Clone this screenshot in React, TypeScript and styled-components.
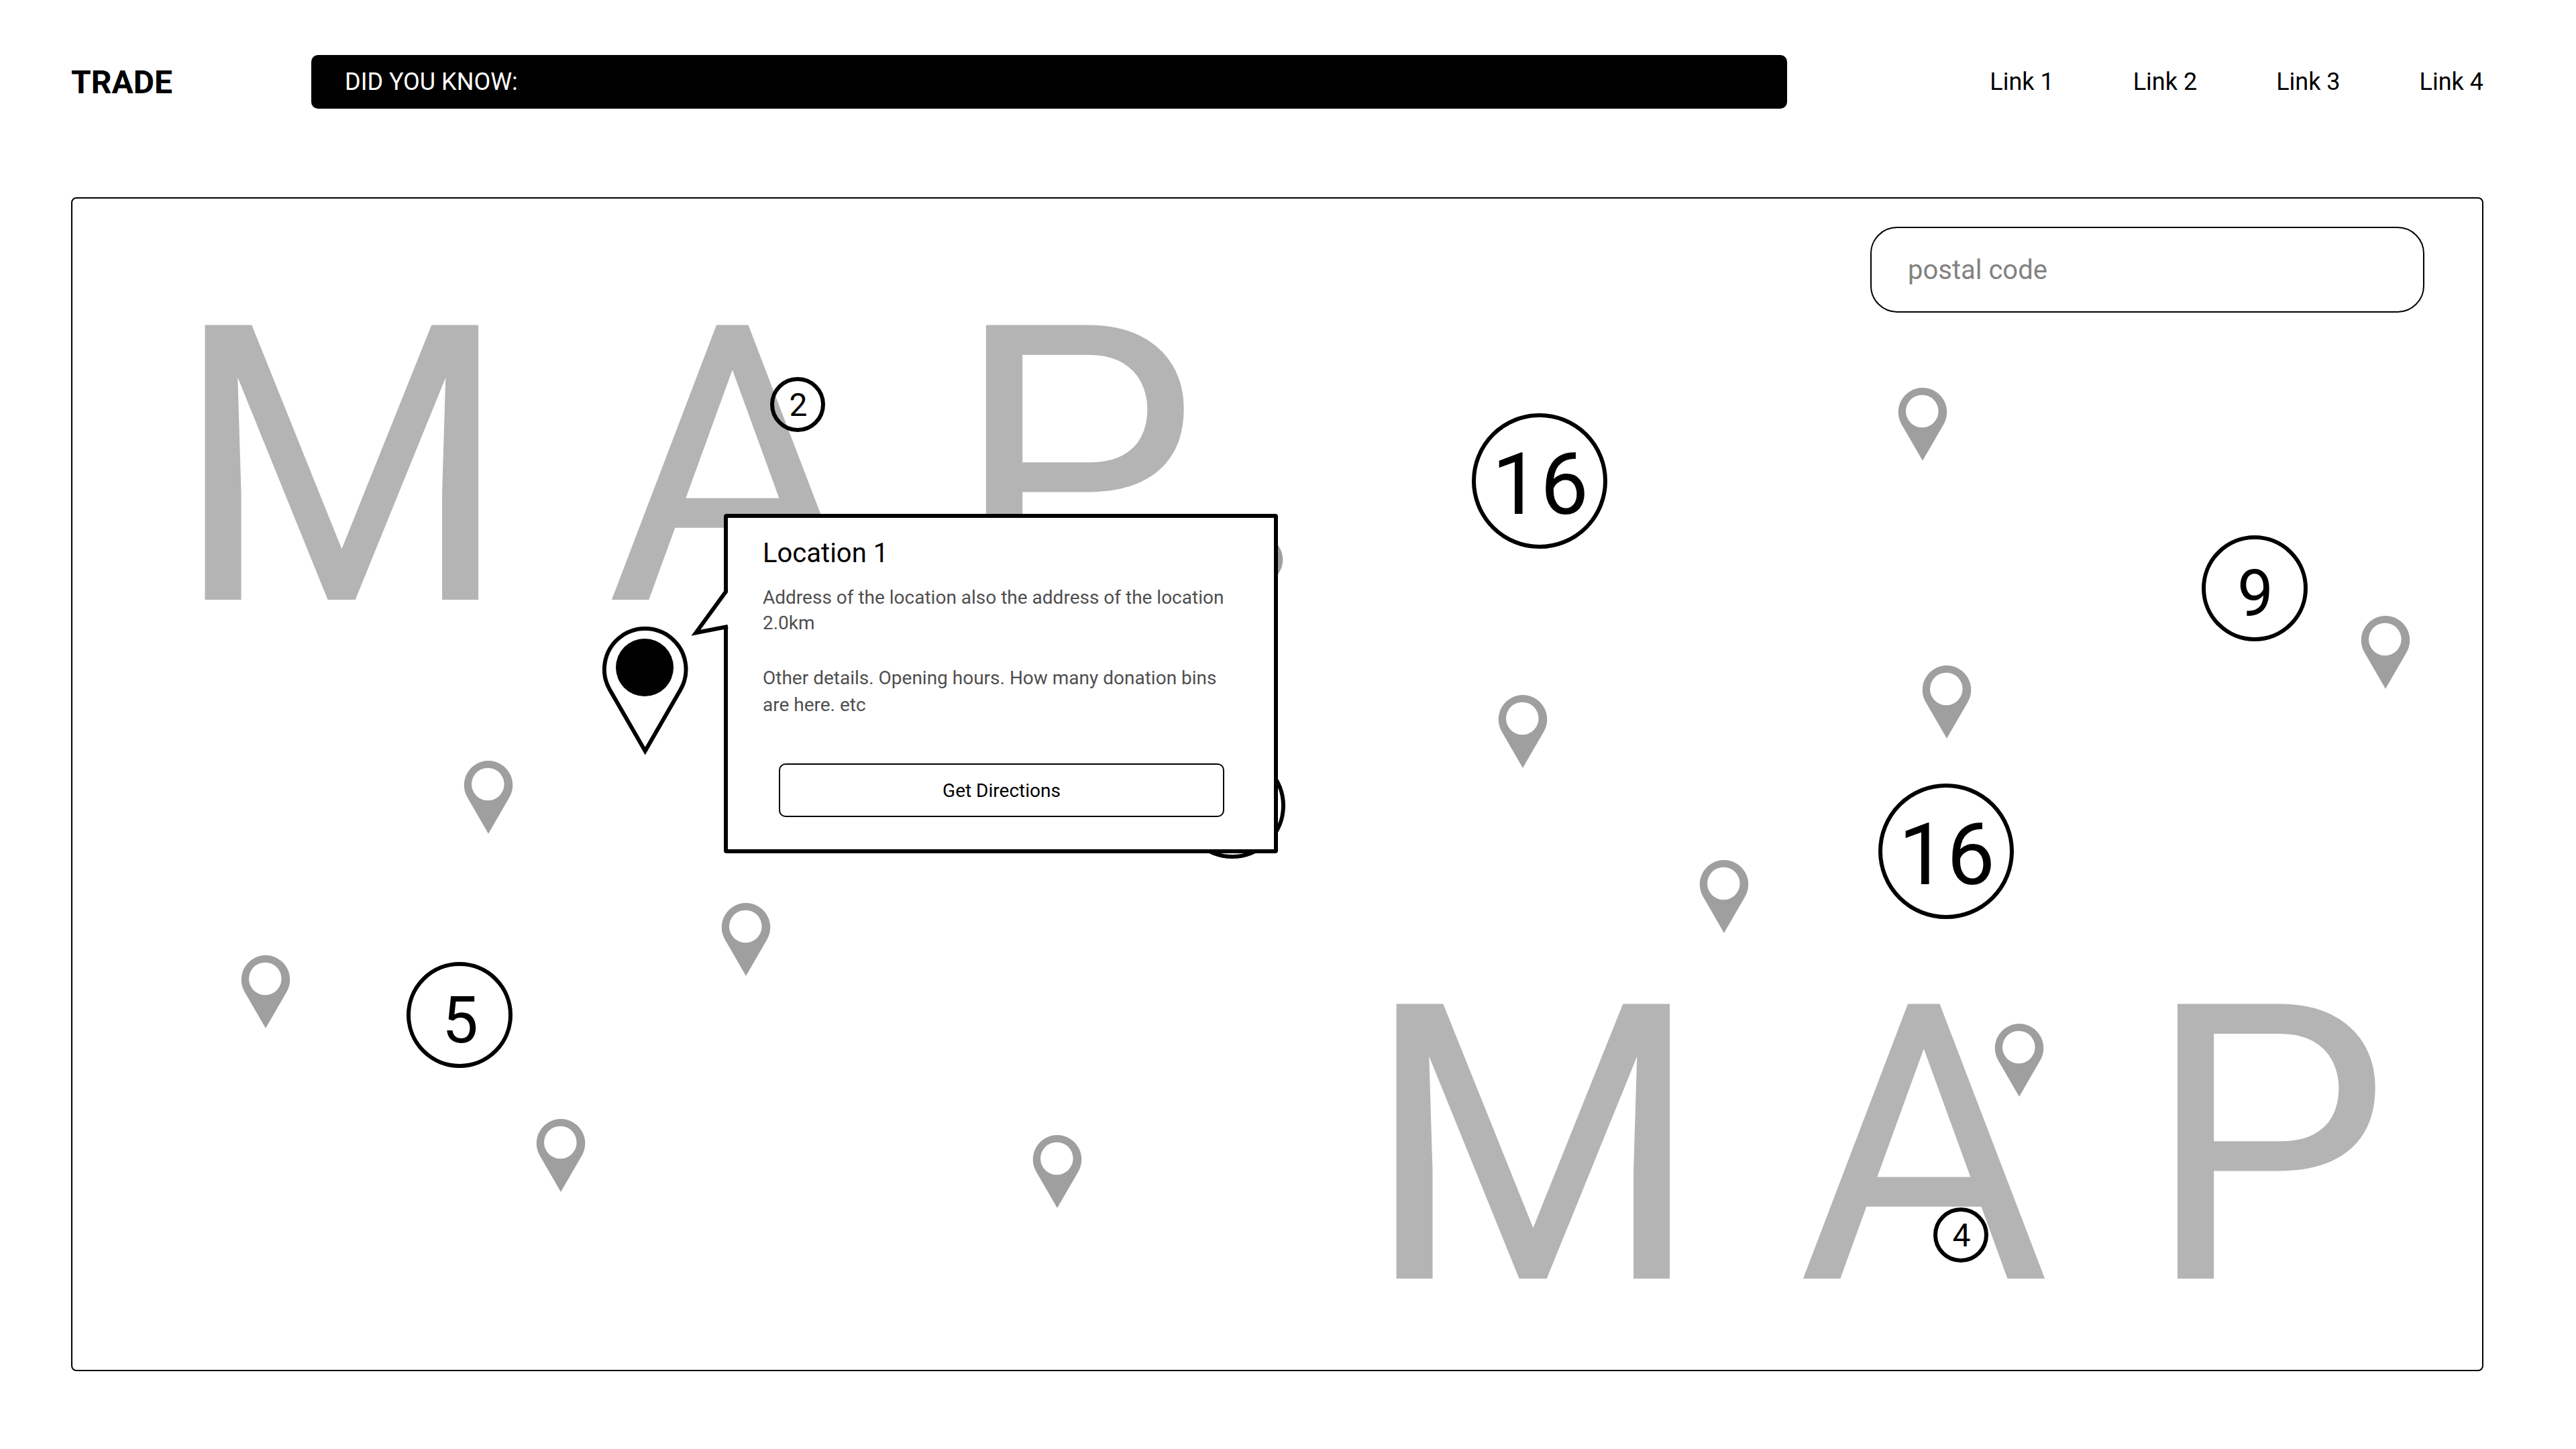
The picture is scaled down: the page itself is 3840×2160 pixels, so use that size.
import React from "react";
import styled, { createGlobalStyle, css } from "styled-components";

const GlobalStyle = createGlobalStyle`
  *, *::before, *::after { box-sizing: border-box; }
  html, body { margin: 0; padding: 0; }
  body {
    background: #fff;
    color: #000;
    font-family: Roboto, "Liberation Sans", sans-serif;
  }
  button, input { font-family: inherit; color: inherit; }
`;

const Page = styled.div`
  display: flex;
  flex-direction: column;
  gap: 132px;
  min-height: 100vh;
  padding: 82px 138px 116px 106px;
`;

const Header = styled.header`
  display: flex;
  align-items: center;
`;

const Brand = styled.h1`
  flex: 0 0 358px;
  margin: 0;
  font-size: 48px;
  font-weight: 700;
`;

const Banner = styled.div`
  flex: 1;
  display: flex;
  align-items: center;
  height: 80px;
  padding: 0 50px;
  border-radius: 10px;
  background: #000;
  color: #fff;
  font-size: 36px;
`;

const Nav = styled.nav`
  display: flex;
  gap: 118px;
  padding-left: 302px;
`;

const NavLink = styled.a`
  color: #000;
  font-size: 36px;
  text-decoration: none;
  white-space: nowrap;
`;

const MapPanel = styled.main`
  position: relative;
  flex: 1;
  display: flex;
  justify-content: flex-end;
  align-items: flex-start;
  padding: 42px 86px;
  border: 2px solid #000;
  border-radius: 8px;
`;

const SearchForm = styled.form`
  display: flex;
  width: 826px;
`;

const SearchInput = styled.input`
  width: 100%;
  height: 128px;
  padding: 0 54px;
  border: 2px solid #000;
  border-radius: 40px;
  background: #fff;
  font-size: 40px;
  &::placeholder { color: #828282; opacity: 1; }
`;

/* The map canvas is drawn on a 3592 x 1746 grid; items are placed as a share of it. */
const GRID_W = 3592;
const GRID_H = 1746;

interface Spot {
  $x: number;
  $y: number;
}

const onMap = css<Spot>`
  position: absolute;
  left: ${({ $x }) => ($x / GRID_W) * 100}%;
  top: ${({ $y }) => ($y / GRID_H) * 100}%;
`;

const MapWord = styled.span<Spot>`
  ${onMap}
  color: #b4b4b4;
  font-size: 576px;
  line-height: 576px;
  white-space: nowrap;
`;

const PinButton = styled.button<Spot>`
  ${onMap}
  padding: 0;
  border: 0;
  background: none;
  cursor: pointer;
  svg { display: block; }
`;

type Size = "small" | "medium" | "large";

const clusterSizes = {
  small: { box: 82, font: 48, drop: 0 },
  medium: { box: 158, font: 96, drop: 16 },
  large: { box: 202, font: 128, drop: 10 },
};

const ClusterButton = styled.button<Spot & { $size: Size }>`
  ${onMap}
  display: flex;
  align-items: center;
  justify-content: center;
  width: ${({ $size }) => clusterSizes[$size].box}px;
  height: ${({ $size }) => clusterSizes[$size].box}px;
  padding: ${({ $size }) => clusterSizes[$size].drop}px 0 0 2px;
  border: 6px solid #000;
  border-radius: 50%;
  background: none;
  font-size: ${({ $size }) => clusterSizes[$size].font}px;
  cursor: pointer;
`;

const Popup = styled.section<Spot>`
  ${onMap}
  display: flex;
  flex-direction: column;
  width: 826px;
  padding: 29px 74px 48px 52px;
  border: 6px solid #000;
  border-radius: 4px;
  background: #fff;
`;

const PopupTail = styled.svg`
  position: absolute;
  left: -58px;
  top: 100px;
  width: 60px;
  height: 80px;
`;

const PopupTitle = styled.h2`
  margin: 0 0 23px;
  font-size: 40px;
  font-weight: 400;
  line-height: 48px;
`;

const PopupText = styled.p`
  margin: 0;
  color: #4f4f4f;
  font-size: 28px;
  line-height: 38px;
`;

const PopupDetails = styled(PopupText)`
  margin: 43px 0 67px;
  line-height: 40px;
`;

const DirectionsButton = styled.button`
  height: 80px;
  margin-left: 24px;
  padding: 0;
  border: 2px solid #000;
  border-radius: 10px;
  background: #fff;
  font-size: 28px;
  cursor: pointer;
`;

const links = ["Link 1", "Link 2", "Link 3", "Link 4"];

const words = [
  { x: 150, y: 114 },
  { x: 1926, y: 1126 },
];

const pins = [
  { x: 2721, y: 282 },
  { x: 2125, y: 740 },
  { x: 2757, y: 696 },
  { x: 2425, y: 986 },
  { x: 3411, y: 622 },
  { x: 583, y: 838 },
  { x: 251, y: 1128 },
  { x: 967, y: 1050 },
  { x: 691, y: 1372 },
  { x: 2865, y: 1230 },
  { x: 1431, y: 1396 },
  { x: 1731, y: 502 },
];

const clusters: { x: number; y: number; size: Size; count?: number }[] = [
  { x: 1040, y: 266, size: "small", count: 2 },
  { x: 2086, y: 320, size: "large", count: 16 },
  { x: 3174, y: 502, size: "medium", count: 9 },
  { x: 2692, y: 872, size: "large", count: 16 },
  { x: 498, y: 1138, size: "medium", count: 5 },
  { x: 2774, y: 1504, size: "small", count: 4 },
  { x: 1650, y: 826, size: "medium" },
];

const PinIcon = () => (
  <svg width="74" height="110" viewBox="0 0 74 110" aria-hidden="true">
    <path
      fill="#9f9f9f"
      fillRule="evenodd"
      d="M5.6 54.4A36.25 36.25 0 1 1 68.4 54.4L37 108.8ZM12 35a24.3 24.3 0 1 0 48.6 0a24.3 24.3 0 1 0-48.6 0Z"
    />
  </svg>
);

const SelectedPinIcon = () => (
  <svg width="128" height="193" viewBox="0 0 128 193" aria-hidden="true">
    <path
      fill="#fff"
      stroke="#000"
      strokeWidth="6"
      d="M11.05 94.2A60.8 60.8 0 1 1 116.35 94.2L63.7 185.4Z"
    />
    <circle cx="63" cy="61" r="43" />
  </svg>
);

export default function App() {
  return (
    <>
      <GlobalStyle />
      <Page>
        <Header>
          <Brand>TRADE</Brand>
          <Banner>DID YOU KNOW:</Banner>
          <Nav>
            {links.map((label) => (
              <NavLink key={label} href="#">
                {label}
              </NavLink>
            ))}
          </Nav>
        </Header>
        <MapPanel>
          {words.map((w) => (
            <MapWord key={w.x} $x={w.x} $y={w.y}>
              M A P
            </MapWord>
          ))}
          {pins.map((p) => (
            <PinButton key={p.x} $x={p.x} $y={p.y} type="button" aria-label="Location">
              <PinIcon />
            </PinButton>
          ))}
          {clusters.map((c) => (
            <ClusterButton
              key={c.x}
              $x={c.x}
              $y={c.y}
              $size={c.size}
              type="button"
              aria-label="Group of locations"
            >
              {c.count}
            </ClusterButton>
          ))}
          <PinButton $x={790} $y={638} type="button" aria-label="Location 1">
            <SelectedPinIcon />
          </PinButton>
          <SearchForm role="search">
            <SearchInput type="text" placeholder="postal code" aria-label="postal code" />
          </SearchForm>
          <Popup $x={971} $y={470}>
            {/* Speech-bubble tail that opens the left border towards the pin */}
            <PopupTail viewBox="0 0 60 80" aria-hidden="true">
              <path fill="#fff" d="M59 10H55L10.3 71.3L55 62.6L59 62Z" />
              <path
                fill="none"
                stroke="#000"
                strokeWidth="6"
                d="M55 6V10L10.3 71.3L58 62"
              />
            </PopupTail>
            <PopupTitle>Location 1</PopupTitle>
            <PopupText>Address of the location also the address of the location</PopupText>
            <PopupText>2.0km</PopupText>
            <PopupDetails>
              Other details. Opening hours. How many donation bins are here. etc
            </PopupDetails>
            <DirectionsButton type="button">Get Directions</DirectionsButton>
          </Popup>
        </MapPanel>
      </Page>
    </>
  );
}
